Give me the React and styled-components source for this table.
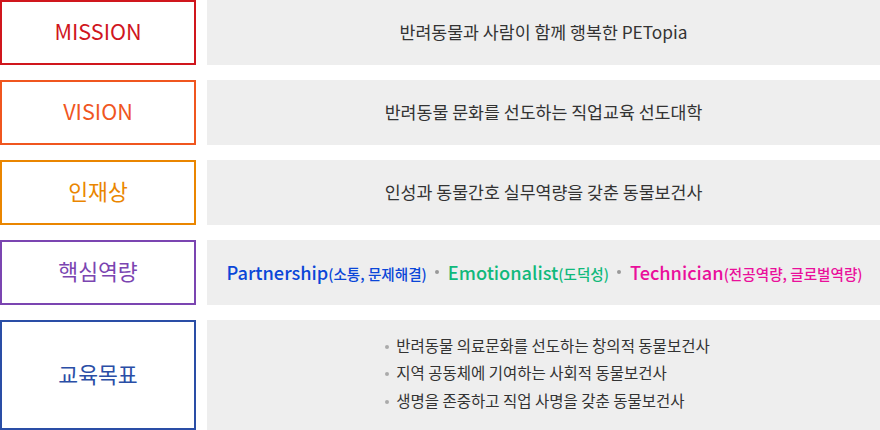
import React from "react";
import styled, { createGlobalStyle } from "styled-components";

const Global = createGlobalStyle`
  html, body { margin: 0; padding: 0; background: #fff; }
  body { font-family: "Noto Sans CJK KR", "Noto Sans", sans-serif; }
`;

const Wrap = styled.div`
  width: 880px;
  display: flex;
  flex-direction: column;
  gap: 15px;
`;

const Row = styled.div`
  display: grid;
  grid-template-columns: 196px 1fr;
  column-gap: 11px;
  height: ${(p) => p.$h}px;
`;

const Label = styled.div`
  box-sizing: border-box;
  border: 2px solid ${(p) => p.$c};
  color: ${(p) => p.$c};
  background: #fff;
  display: flex;
  align-items: center;
  justify-content: center;
  font-size: 21.6px;
  font-weight: 400;
  padding-bottom: 4px;
`;

const Panel = styled.div`
  background: #eeeeee;
  display: flex;
  align-items: center;
  justify-content: center;
  color: #333;
  font-size: 17.3px;
  padding-bottom: ${(p) => p.$pb || 0}px;
  box-sizing: border-box;
`;

const Keyword = styled.span`
  color: ${(p) => p.$c};
  font-size: 18.2px;
  font-weight: 500;
  white-space: nowrap;
`;

const Sub = styled.span`
  font-size: 14.6px;
`;

const Sep = styled.span`
  display: inline-block;
  width: 4px;
  height: 4px;
  border-radius: 50%;
  background: #999;
  margin: 0 8.5px;
  vertical-align: middle;
`;

const Line = styled.div`
  display: flex;
  align-items: center;
  margin-left: 2px;
`;

const List = styled.ul`
  list-style: none;
  margin: 0 0 0 6px;
  padding: 0;
  font-size: 15.5px;
  line-height: 27.5px;
`;

const Item = styled.li`
  position: relative;
  padding-left: 13px;
  &::before {
    content: "";
    position: absolute;
    left: 2px;
    top: 13px;
    width: 4px;
    height: 4px;
    border-radius: 50%;
    background: #aaa;
  }
`;

const rows = [
  { label: "MISSION", color: "#d0161d", text: "반려동물과 사람이 함께 행복한 PETopia" },
  { label: "VISION", color: "#f0561f", text: "반려동물 문화를 선도하는 직업교육 선도대학" },
  { label: "인재상", color: "#ea8600", text: "인성과 동물간호 실무역량을 갖춘 동물보건사" },
];

export default function App() {
  return (
    <>
      <Global />
      <Wrap>
        {rows.map((r) => (
          <Row key={r.label} $h={65}>
            <Label $c={r.color}>{r.label}</Label>
            <Panel $pb={2}>{r.text}</Panel>
          </Row>
        ))}
        <Row $h={65}>
          <Label $c="#7b45b1">핵심역량</Label>
          <Panel $pb={2}>
            <Line>
              <Keyword $c="#0a46d8">
                Partnership<Sub>(소통, 문제해결)</Sub>
              </Keyword>
              <Sep />
              <Keyword $c="#10b97b">
                Emotionalist<Sub>(도덕성)</Sub>
              </Keyword>
              <Sep />
              <Keyword $c="#ea0f9b">
                Technician<Sub>(전공역량, 글로벌역량)</Sub>
              </Keyword>
            </Line>
          </Panel>
        </Row>
        <Row $h={110}>
          <Label $c="#2a4ea6">교육목표</Label>
          <Panel $pb={4}>
            <List>
              <Item>반려동물 의료문화를 선도하는 창의적 동물보건사</Item>
              <Item>지역 공동체에 기여하는 사회적 동물보건사</Item>
              <Item>생명을 존중하고 직업 사명을 갖춘 동물보건사</Item>
            </List>
          </Panel>
        </Row>
      </Wrap>
    </>
  );
}
